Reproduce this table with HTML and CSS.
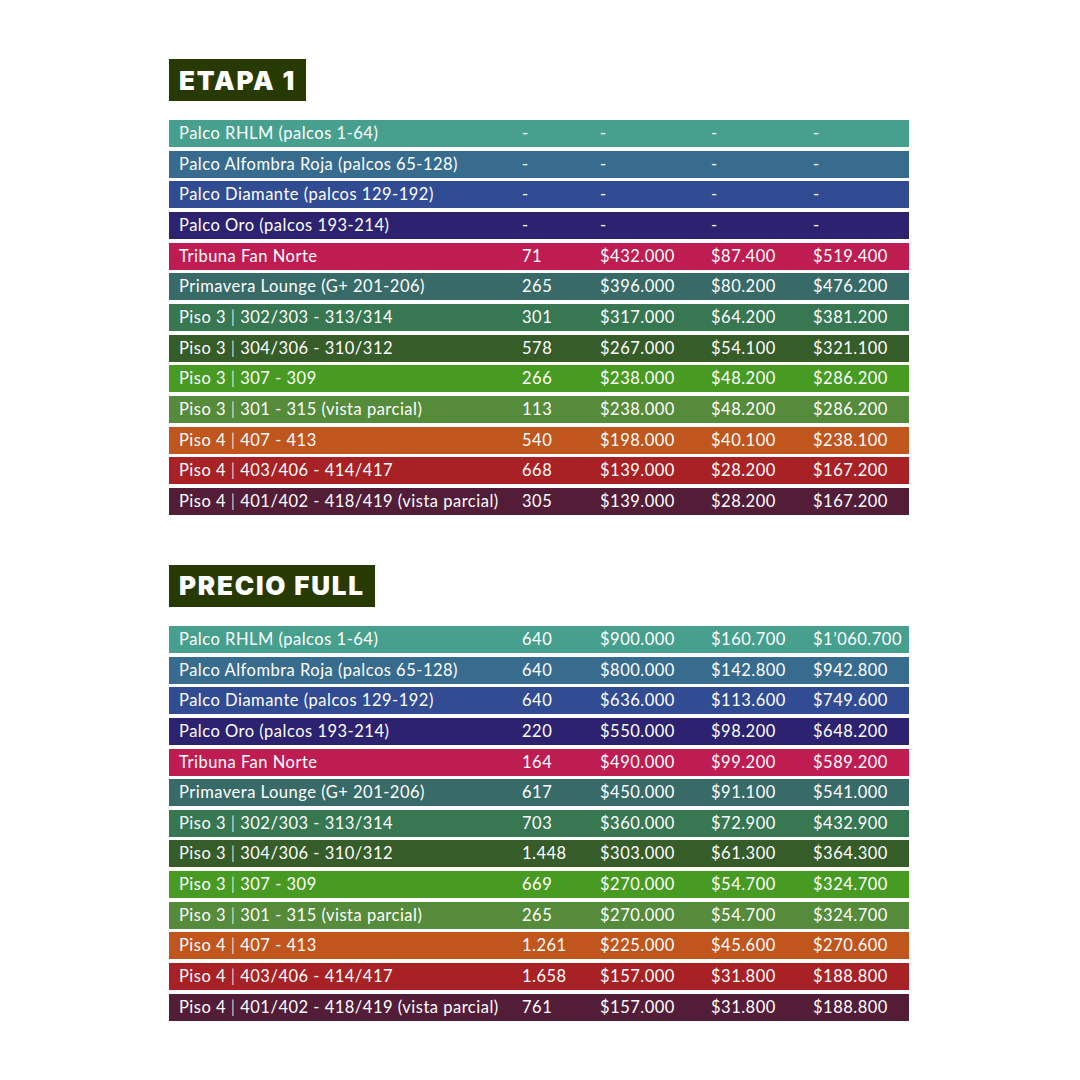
FILE: index.html
```html
<!DOCTYPE html>
<html lang="es">
<head>
<meta charset="utf-8">
<link rel="stylesheet" href="styles.css">
</head>
<body>
<div class="page">
  <section class="section">
    <h2 class="title">ETAPA 1</h2>
    <div class="table">
      <div class="row c1"><span>Palco RHLM (palcos 1-64)</span><span>-</span><span>-</span><span>-</span><span>-</span></div>
      <div class="row c2"><span>Palco Alfombra Roja (palcos 65-128)</span><span>-</span><span>-</span><span>-</span><span>-</span></div>
      <div class="row c3"><span>Palco Diamante (palcos 129-192)</span><span>-</span><span>-</span><span>-</span><span>-</span></div>
      <div class="row c4"><span>Palco Oro (palcos 193-214)</span><span>-</span><span>-</span><span>-</span><span>-</span></div>
      <div class="row c5"><span>Tribuna Fan Norte</span><span>71</span><span>$432.000</span><span>$87.400</span><span>$519.400</span></div>
      <div class="row c6"><span>Primavera Lounge (G+ 201-206)</span><span>265</span><span>$396.000</span><span>$80.200</span><span>$476.200</span></div>
      <div class="row c7"><span>Piso 3 <i class="bar">|</i> 302/303 - 313/314</span><span>301</span><span>$317.000</span><span>$64.200</span><span>$381.200</span></div>
      <div class="row c8"><span>Piso 3 <i class="bar">|</i> 304/306 - 310/312</span><span>578</span><span>$267.000</span><span>$54.100</span><span>$321.100</span></div>
      <div class="row c9"><span>Piso 3 <i class="bar">|</i> 307 - 309</span><span>266</span><span>$238.000</span><span>$48.200</span><span>$286.200</span></div>
      <div class="row c10"><span>Piso 3 <i class="bar">|</i> 301 - 315 (vista parcial)</span><span>113</span><span>$238.000</span><span>$48.200</span><span>$286.200</span></div>
      <div class="row c11"><span>Piso 4 <i class="bar">|</i> 407 - 413</span><span>540</span><span>$198.000</span><span>$40.100</span><span>$238.100</span></div>
      <div class="row c12"><span>Piso 4 <i class="bar">|</i> 403/406 - 414/417</span><span>668</span><span>$139.000</span><span>$28.200</span><span>$167.200</span></div>
      <div class="row c13"><span>Piso 4 <i class="bar">|</i> 401/402 - 418/419 (vista parcial)</span><span>305</span><span>$139.000</span><span>$28.200</span><span>$167.200</span></div>
    </div>
  </section>
  <section class="section second">
    <h2 class="title">PRECIO FULL</h2>
    <div class="table">
      <div class="row c1"><span>Palco RHLM (palcos 1-64)</span><span>640</span><span>$900.000</span><span>$160.700</span><span>$1’060.700</span></div>
      <div class="row c2"><span>Palco Alfombra Roja (palcos 65-128)</span><span>640</span><span>$800.000</span><span>$142.800</span><span>$942.800</span></div>
      <div class="row c3"><span>Palco Diamante (palcos 129-192)</span><span>640</span><span>$636.000</span><span>$113.600</span><span>$749.600</span></div>
      <div class="row c4"><span>Palco Oro (palcos 193-214)</span><span>220</span><span>$550.000</span><span>$98.200</span><span>$648.200</span></div>
      <div class="row c5"><span>Tribuna Fan Norte</span><span>164</span><span>$490.000</span><span>$99.200</span><span>$589.200</span></div>
      <div class="row c6"><span>Primavera Lounge (G+ 201-206)</span><span>617</span><span>$450.000</span><span>$91.100</span><span>$541.000</span></div>
      <div class="row c7"><span>Piso 3 <i class="bar">|</i> 302/303 - 313/314</span><span>703</span><span>$360.000</span><span>$72.900</span><span>$432.900</span></div>
      <div class="row c8"><span>Piso 3 <i class="bar">|</i> 304/306 - 310/312</span><span>1.448</span><span>$303.000</span><span>$61.300</span><span>$364.300</span></div>
      <div class="row c9"><span>Piso 3 <i class="bar">|</i> 307 - 309</span><span>669</span><span>$270.000</span><span>$54.700</span><span>$324.700</span></div>
      <div class="row c10"><span>Piso 3 <i class="bar">|</i> 301 - 315 (vista parcial)</span><span>265</span><span>$270.000</span><span>$54.700</span><span>$324.700</span></div>
      <div class="row c11"><span>Piso 4 <i class="bar">|</i> 407 - 413</span><span>1.261</span><span>$225.000</span><span>$45.600</span><span>$270.600</span></div>
      <div class="row c12"><span>Piso 4 <i class="bar">|</i> 403/406 - 414/417</span><span>1.658</span><span>$157.000</span><span>$31.800</span><span>$188.800</span></div>
      <div class="row c13"><span>Piso 4 <i class="bar">|</i> 401/402 - 418/419 (vista parcial)</span><span>761</span><span>$157.000</span><span>$31.800</span><span>$188.800</span></div>
    </div>
  </section>
</div>
</body>
</html>
```

FILE: styles.css
```css
* { box-sizing: border-box; }
html, body { margin: 0; padding: 0; background: #ffffff; }
body { width: 1080px; height: 1080px; overflow: hidden; }

.page {
  padding: 59px 0 0 169px;
  display: flex;
  flex-direction: column;
}

.section { display: flex; flex-direction: column; align-items: flex-start; }
.second { margin-top: 50px; }

.title {
  margin: 0;
  height: 42px;
  padding: 0 10px 0 10px;
  display: flex;
  align-items: center;
  background: #283a03;
  color: #ffffff;
  font-family: "Inter", "Liberation Sans", sans-serif;
  font-weight: 900;
  font-size: 26px;
  letter-spacing: 1.8px;
}

.table {
  margin-top: 19px;
  width: 740px;
  display: flex;
  flex-direction: column;
  gap: 3.67px;
}

.row {
  height: 27px;
  display: grid;
  grid-template-columns: 343px 78px 111px 102px 1fr;
  align-items: center;
  padding-left: 10px;
  padding-bottom: 1px;
  color: #ffffff;
  font-family: "Lato", "Noto Sans", sans-serif;
  font-size: 16.5px;
  letter-spacing: 0.5px;
  white-space: nowrap;
}

.bar { font-style: normal; color: rgba(255,255,255,0.75); }

.c1 { background: #47a08e; }
.c2 { background: #376c8f; }
.c3 { background: #314c93; }
.c4 { background: #2c2270; }
.c5 { background: #bf1c52; }
.c6 { background: #386b68; }
.c7 { background: #377752; }
.c8 { background: #355c29; }
.c9 { background: #479b22; }
.c10 { background: #558b3a; }
.c11 { background: #c0561d; }
.c12 { background: #a82125; }
.c13 { background: #531d38; }
```
